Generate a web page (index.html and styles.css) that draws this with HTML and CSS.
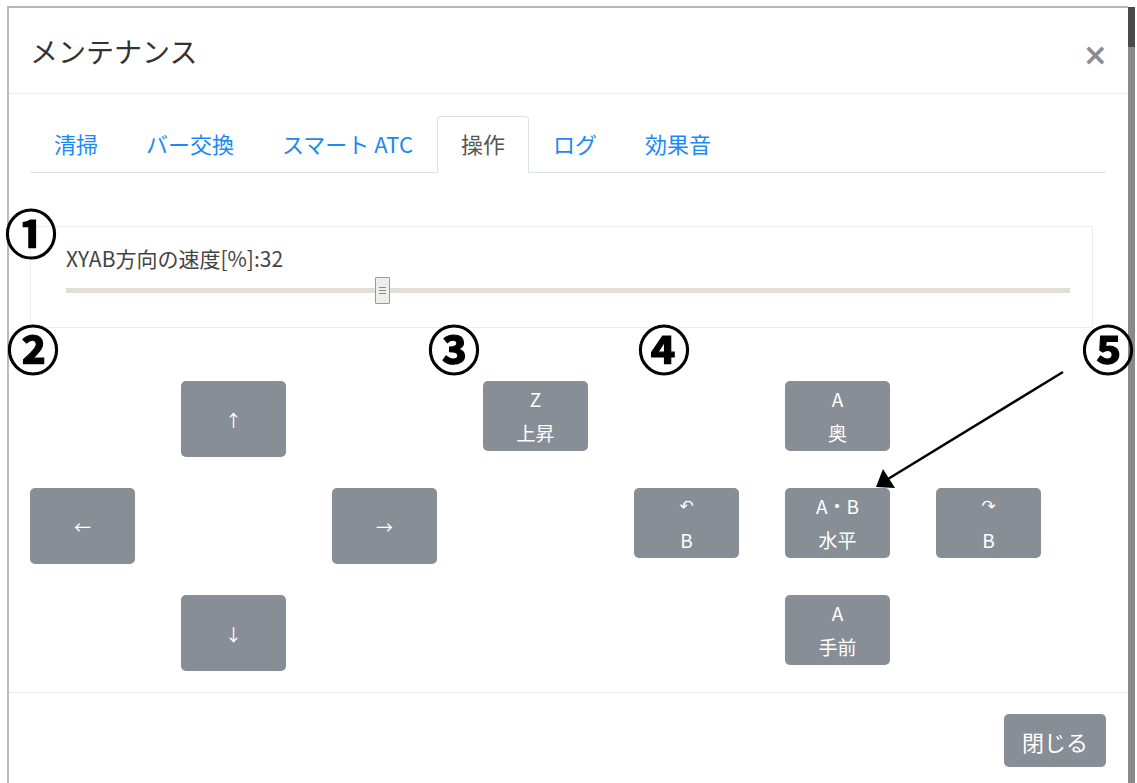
FILE: index.html
```html
<!DOCTYPE html>
<html lang="ja">
<head>
  <meta charset="UTF-8" />
  <title>メンテナンス</title>
  <link rel="stylesheet" href="styles.css">
</head>
<body>

<div class="screen">
  <div class="modal">
    <div class="modal-header">
      <h5 class="modal-title">メンテナンス</h5>
      <button class="close">&times;</button>
    </div>

    <div class="modal-body">
      <ul class="nav-tabs">
        <li><a class="nav-link">清掃</a></li>
        <li><a class="nav-link">バー交換</a></li>
        <li><a class="nav-link">スマート ATC</a></li>
        <li><a class="nav-link active">操作</a></li>
        <li><a class="nav-link">ログ</a></li>
        <li><a class="nav-link">効果音</a></li>
      </ul>

      <div class="speed-card">
        <label class="speed-label">XYAB方向の速度[%]:32</label>
        <div class="slider">
          <div class="slider-track"></div>
          <div class="slider-thumb" style="left: 31.5%;"><span></span><span></span><span></span></div>
        </div>
      </div>

      <!-- jog buttons -->
      <div class="jog-grid">
        <button class="jog tall c2 r1">↑</button>
        <button class="jog c4 r1"><span>Z</span><span>上昇</span></button>
        <button class="jog c6 r1"><span>A</span><span>奥</span></button>

        <button class="jog tall c1 r2">←</button>
        <button class="jog tall c3 r2">→</button>
        <button class="jog c5 r2"><span class="rot">↶</span><span>B</span></button>
        <button class="jog c6 r2"><span>A・B</span><span>水平</span></button>
        <button class="jog c7 r2"><span class="rot">↷</span><span>B</span></button>

        <button class="jog tall c2 r3">↓</button>
        <button class="jog c6 r3"><span>A</span><span>手前</span></button>
      </div>
    </div>

    <div class="modal-footer">
      <button class="btn-close">閉じる</button>
    </div>
  </div>
  <div class="scrollbar"></div>

  <!-- annotations -->
  <div class="mark m1">①</div>
  <div class="mark m2">②</div>
  <div class="mark m3">③</div>
  <div class="mark m4">④</div>
  <div class="mark m5">⑤</div>
  <svg class="pointer" width="1137" height="783" viewBox="0 0 1137 783">
    <line x1="1063" y1="372" x2="888" y2="479" stroke="#000" stroke-width="2.5"/>
    <polygon points="876,487 883,469 895,488" fill="#000"/>
  </svg>
</div>

</body>
</html>
```

FILE: styles.css
```css
body {
  margin: 0;
  background: #fff;
  font-family: "Noto Sans CJK JP", "DejaVu Sans", sans-serif;
}
.screen {
  position: relative;
  width: 1137px;
  height: 783px;
  overflow: hidden;
  display: flex;
  padding: 6px 2px 0 7px;
  box-sizing: border-box;
}
.modal {
  flex: 1;
  border-top: 2px solid #b4b4b4;
  border-left: 2px solid #bdbdbd;
  background: #fff;
  color: #333;
}
.scrollbar {
  width: 7px;
  margin-top: 1px;
  background: linear-gradient(#4a4a4a 0, #4a4a4a 40px, #8a8a8a 40px);
}

/* header */
.modal-header {
  height: 85px;
  padding: 0 20px 0 21px;
  border-bottom: 1px solid #e9ecef;
  display: flex;
  align-items: center;
  justify-content: space-between;
}
.modal-title {
  margin: 0;
  font-size: 28px;
  font-weight: 400;
  color: #333;
}
.close {
  border: none;
  background: none;
  padding: 0;
  margin-top: 8px;
  font-family: "DejaVu Sans", sans-serif;
  font-size: 30px;
  font-weight: bold;
  color: #8c8c8c;
  cursor: pointer;
}

/* body */
.modal-body {
  padding: 22px 22px 21px 21px;
}
.nav-tabs {
  list-style: none;
  margin: 0;
  padding: 0;
  display: flex;
  height: 57px;
  border-bottom: 1px solid #dee2e6;
  box-sizing: border-box;
}
.nav-link {
  display: block;
  height: 57px;
  box-sizing: border-box;
  padding: 0 23px;
  line-height: 53px;
  font-size: 22px;
  color: #1a88f5;
  border: 1px solid transparent;
  border-radius: 4px 4px 0 0;
}
.nav-link.active {
  color: #555;
  background: #fff;
  border-color: #dee2e6 #dee2e6 #fff;
}

.speed-card {
  margin: 53px 13px 0 0;
  height: 102px;
  box-sizing: border-box;
  border: 1px solid #ebedef;
  padding: 18px 22px 0 35px;
}
.speed-label {
  display: block;
  font-size: 21px;
  line-height: 26px;
  color: #444;
}
.slider {
  position: relative;
  margin-top: 6px;
  height: 27px;
}
.slider-track {
  position: relative;
  top: 11px;
  height: 5px;
  background: #e3ded8;
}
.slider-thumb {
  position: absolute;
  top: 0;
  width: 15px;
  height: 27px;
  margin-left: -7px;
  box-sizing: border-box;
  background: #efedea;
  border: 1px solid #9d9a96;
  border-radius: 1px;
  display: flex;
  flex-direction: column;
  align-items: center;
  justify-content: center;
  gap: 2px;
}
.slider-thumb span {
  width: 7px;
  height: 1px;
  background: #8a8a8a;
}

/* jog buttons */
.jog-grid {
  margin-top: 53px;
  display: grid;
  grid-template-columns: repeat(7, 105px);
  grid-template-rows: repeat(3, 76px);
  column-gap: 46px;
  row-gap: 31px;
  align-items: start;
}
.jog {
  height: 70px;
  border: none;
  border-radius: 5px;
  background: #878e95;
  color: #fff;
  font-family: inherit;
  font-size: 19px;
  padding: 1px 0;
  display: flex;
  flex-direction: column;
  align-items: center;
  justify-content: center;
  cursor: pointer;
}
.jog span {
  line-height: 34px;
}
.jog .rot {
  font-family: "DejaVu Sans", sans-serif;
  font-size: 17px;
}
.jog.tall {
  height: 76px;
  font-size: 17px;
}
.c1 { grid-column: 1; }
.c2 { grid-column: 2; }
.c3 { grid-column: 3; }
.c4 { grid-column: 4; }
.c5 { grid-column: 5; }
.c6 { grid-column: 6; }
.c7 { grid-column: 7; }
.r1 { grid-row: 1; }
.r2 { grid-row: 2; }
.r3 { grid-row: 3; }

/* footer */
.modal-footer {
  border-top: 1px solid #e9ecef;
  padding: 21px 22px;
  display: flex;
  justify-content: flex-end;
}
.btn-close {
  height: 53px;
  padding: 0 18px;
  border: none;
  border-radius: 5px;
  background: #878e95;
  color: #fff;
  font-family: inherit;
  font-size: 22px;
  cursor: pointer;
}

/* annotations */
.mark {
  position: absolute;
  font-size: 52px;
  font-weight: 700;
  line-height: 1;
  color: #000;
  -webkit-text-stroke: 1.2px #000;
}
.m1 { left: 5px; top: 206px; }
.m2 { left: 7px; top: 322px; }
.m3 { left: 428px; top: 322px; }
.m4 { left: 638px; top: 322px; }
.m5 { left: 1082px; top: 322px; }
.pointer {
  position: absolute;
  left: 0;
  top: 0;
}
```
